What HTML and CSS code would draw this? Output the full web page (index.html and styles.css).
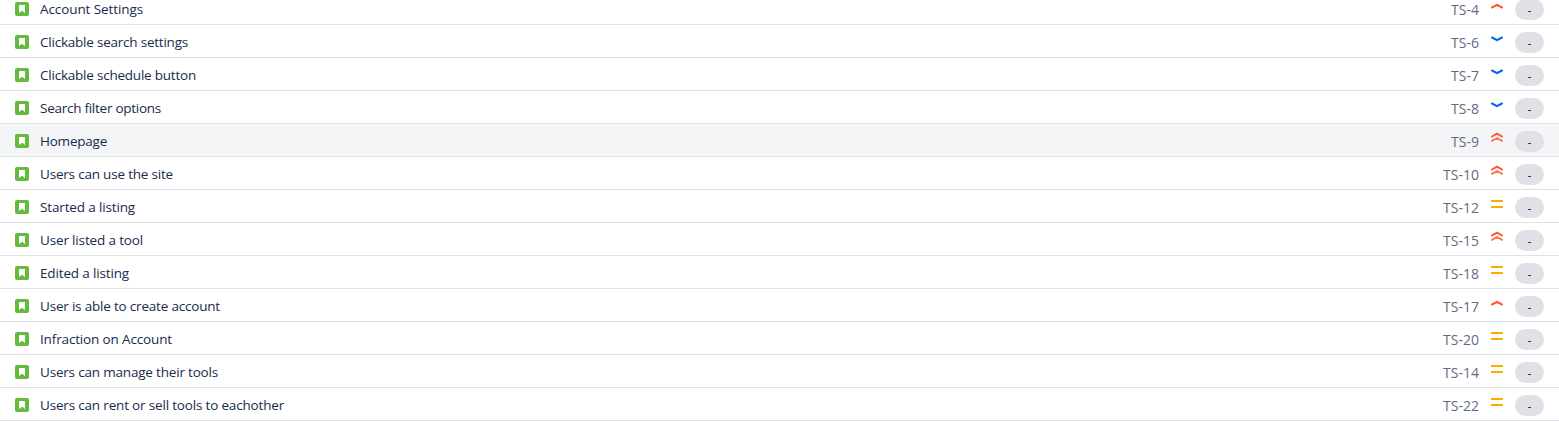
FILE: index.html
```html
<!DOCTYPE html>
<html lang="en"><head><meta charset="utf-8"><title>Backlog</title><link rel="stylesheet" href="styles.css"></head>
<body><main class="backlog" id="backlog"></main><script src="app.js"></script></body></html>
```
FILE: styles.css
```css
* { box-sizing: border-box; }
body { margin: 0; background: #fff; overflow: hidden; font-family: "Open Sans", "Noto Sans", sans-serif; font-size: 13.5px; color: #172b4d; }
.backlog { margin-top: -8px; }
.row { display: flex; align-items: center; height: 33px; padding: 2px 15px 0; border-bottom: 1px solid #dfe1e6; }
.row.active { background: #f4f5f7; }
.type { width: 14px; height: 14px; margin-right: 11px; }
.title { flex: 1; line-height: 20px; }
.title span, .key span { display: inline-block; white-space: nowrap; }
.key { color: #5e6c84; font-size: 14px; line-height: 20px; margin: 2px 10px 0 0; }
.priority { width: 16px; height: 16px; margin: -6px 10px 0 0; fill: none; stroke-width: 2; stroke-linecap: round; stroke-linejoin: round; }
.estimate { width: 29px; height: 21px; margin-top: 1px; border-radius: 10.5px; background: #dfe1e6; text-align: center; line-height: 23px; font-size: 12px; }
```
FILE: app.js
```js
const issues = [
  ["Account Settings", "TS-4", "high", 103, 28], ["Clickable search settings", "TS-6", "low", 148, 28],
  ["Clickable schedule button", "TS-7", "low", 156, 28], ["Search filter options", "TS-8", "low", 121, 28],
  ["Homepage", "TS-9", "highest", 67, 28], ["Users can use the site", "TS-10", "highest", 133, 36],
  ["Started a listing", "TS-12", "medium", 95, 36], ["User listed a tool", "TS-15", "highest", 103, 36],
  ["Edited a listing", "TS-18", "medium", 89, 36], ["User is able to create account", "TS-17", "high", 180, 36],
  ["Infraction on Account", "TS-20", "medium", 132, 36], ["Users can manage their tools", "TS-14", "medium", 178, 36],
  ["Users can rent or sell tools to eachother", "TS-22", "medium", 244, 36]
];
const icons = {
  high: '<path stroke="#ff5630" d="M3 9.500 8 6.800l5 2.700"/>',
  low: '<path stroke="#0065ff" d="M3 6.500l5 2.700 5-2.700"/>',
  medium: '<path stroke="#ffab00" stroke-linecap="butt" d="M2 5h12M2 11h12"/>',
  highest: '<path stroke="#ff5630" d="M3 6.500l5-2.800 5 2.800"/><path stroke="#ff7452" d="M3 10.800l5-2.800 5 2.800"/>'
};
document.getElementById("backlog").innerHTML = issues.map(([title, key, p]) =>
  `<div class="row${title === "Homepage" ? " active" : ""}"><svg class="type" viewBox="0 0 14 14"><rect width="14" height="14" rx="2" fill="#63ba3c"/><path d="M4.500 3h5q.5 0 .5.500V11L7 8.800 4 11V3.500q0-.5.500-.5z" fill="#fff"/></svg><div class="title"><span>${title}</span></div><div class="key"><span>${key}</span></div><svg class="priority" viewBox="0 0 16 16">${icons[p]}</svg><div class="estimate">-</div></div>`).join("");
document.querySelectorAll(".row").forEach((row, i) => {
  [[".title span", 3], [".key span", 4]].forEach(([s, n]) => {
    const el = row.querySelector(s);
    el.style.letterSpacing = (issues[i][n] - el.getBoundingClientRect().width) / el.textContent.length + "px";
  });
});
```
